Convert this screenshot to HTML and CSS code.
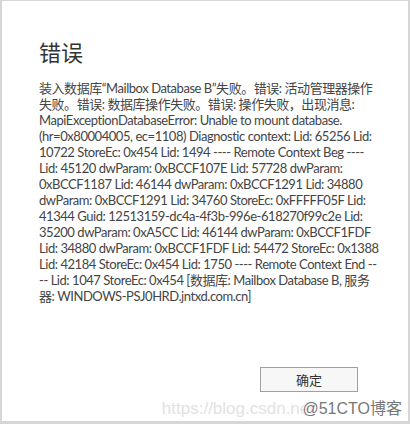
FILE: index.html
```html
<!DOCTYPE html>
<html lang="zh-CN">
<head>
<meta charset="utf-8">
<title>错误</title>
<link rel="stylesheet" href="styles.css">
</head>
<body>
<div class="dialog">
  <h1 class="title">错误</h1>
  <p class="message">装入数据库“Mailbox Database B”失败。错误: 活动管理器操作<br>失败。错误: 数据库操作失败。错误: 操作失败，出现消息:<br>MapiExceptionDatabaseError: Unable to mount database.<br>(hr=0x80004005, ec=1108) Diagnostic context: Lid: 65256 Lid:<br>10722 StoreEc: 0x454 Lid: 1494 ---- Remote Context Beg ----<br>Lid: 45120 dwParam: 0xBCCF107E Lid: 57728 dwParam:<br>0xBCCF1187 Lid: 46144 dwParam: 0xBCCF1291 Lid: 34880<br>dwParam: 0xBCCF1291 Lid: 34760 StoreEc: 0xFFFFF05F Lid:<br>41344 Guid: 12513159-dc4a-4f3b-996e-618270f99c2e Lid:<br>35200 dwParam: 0xA5CC Lid: 46144 dwParam: 0xBCCF1FDF<br>Lid: 34880 dwParam: 0xBCCF1FDF Lid: 54472 StoreEc: 0x1388<br>Lid: 42184 StoreEc: 0x454 Lid: 1750 ---- Remote Context End --<br>-- Lid: 1047 StoreEc: 0x454 [数据库: Mailbox Database B, 服务<br>器: WINDOWS-PSJ0HRD.jntxd.com.cn]</p>
  <div class="actions">
    <button class="btn" type="button">确定</button>
  </div>
  <div class="watermark">
    <span class="wm-url">https://blog.csdn.net</span>
    <span class="wm-brand">@51CTO博客</span>
  </div>
</div>
</body>
</html>
```
FILE: styles.css
```css
html, body {
  margin: 0;
  padding: 0;
  background: #ffffff;
}
body {
  width: 410px;
  height: 424px;
  overflow: hidden;
}
.dialog {
  position: relative;
  box-sizing: border-box;
  width: 410px;
  height: 424px;
  background: #ffffff;
  border-style: solid;
  border-color: #d6d6d6;
  border-width: 1px 2px 3px 2px;
  padding: 36px 0 0 37px;
  display: flex;
  flex-direction: column;
  font-family: Lato, "Noto Sans CJK SC", sans-serif;
  color: #444444;
}
.title {
  margin: 0;
  font-family: "Noto Sans CJK SC", sans-serif;
  font-weight: 400;
  font-size: 22px;
  line-height: 28px;
  color: #333333;
}
.message {
  margin: 15px 0 0 0;
  font-size: 13px;
  line-height: 16px;
  letter-spacing: -0.45px;
  white-space: nowrap;
}
.actions {
  display: flex;
  justify-content: flex-end;
  padding-right: 50px;
  margin-top: 63px;
}
.btn {
  box-sizing: border-box;
  width: 98px;
  height: 25px;
  margin: 0;
  padding: 0;
  border: 1px solid #a0a0a0;
  background: #f7f7f7;
  color: #333333;
  font-family: "Noto Sans CJK SC", sans-serif;
  font-size: 13px;
}
.watermark {
  position: absolute;
  right: 6px;
  bottom: 2px;
  height: 22px;
  font-family: "Liberation Sans", "Noto Sans CJK SC", sans-serif;
  white-space: nowrap;
}
.wm-url {
  position: absolute;
  right: 88px;
  bottom: 0;
  color: #e2e2e2;
  font-size: 17px;
  line-height: 20px;
}
.wm-brand {
  position: absolute;
  right: 0;
  bottom: 0;
  color: #777777;
  line-height: 20px;
  font-size: 16px;
  text-shadow: 0 0 2px #ffffff, 0 0 2px #ffffff;
}
```
